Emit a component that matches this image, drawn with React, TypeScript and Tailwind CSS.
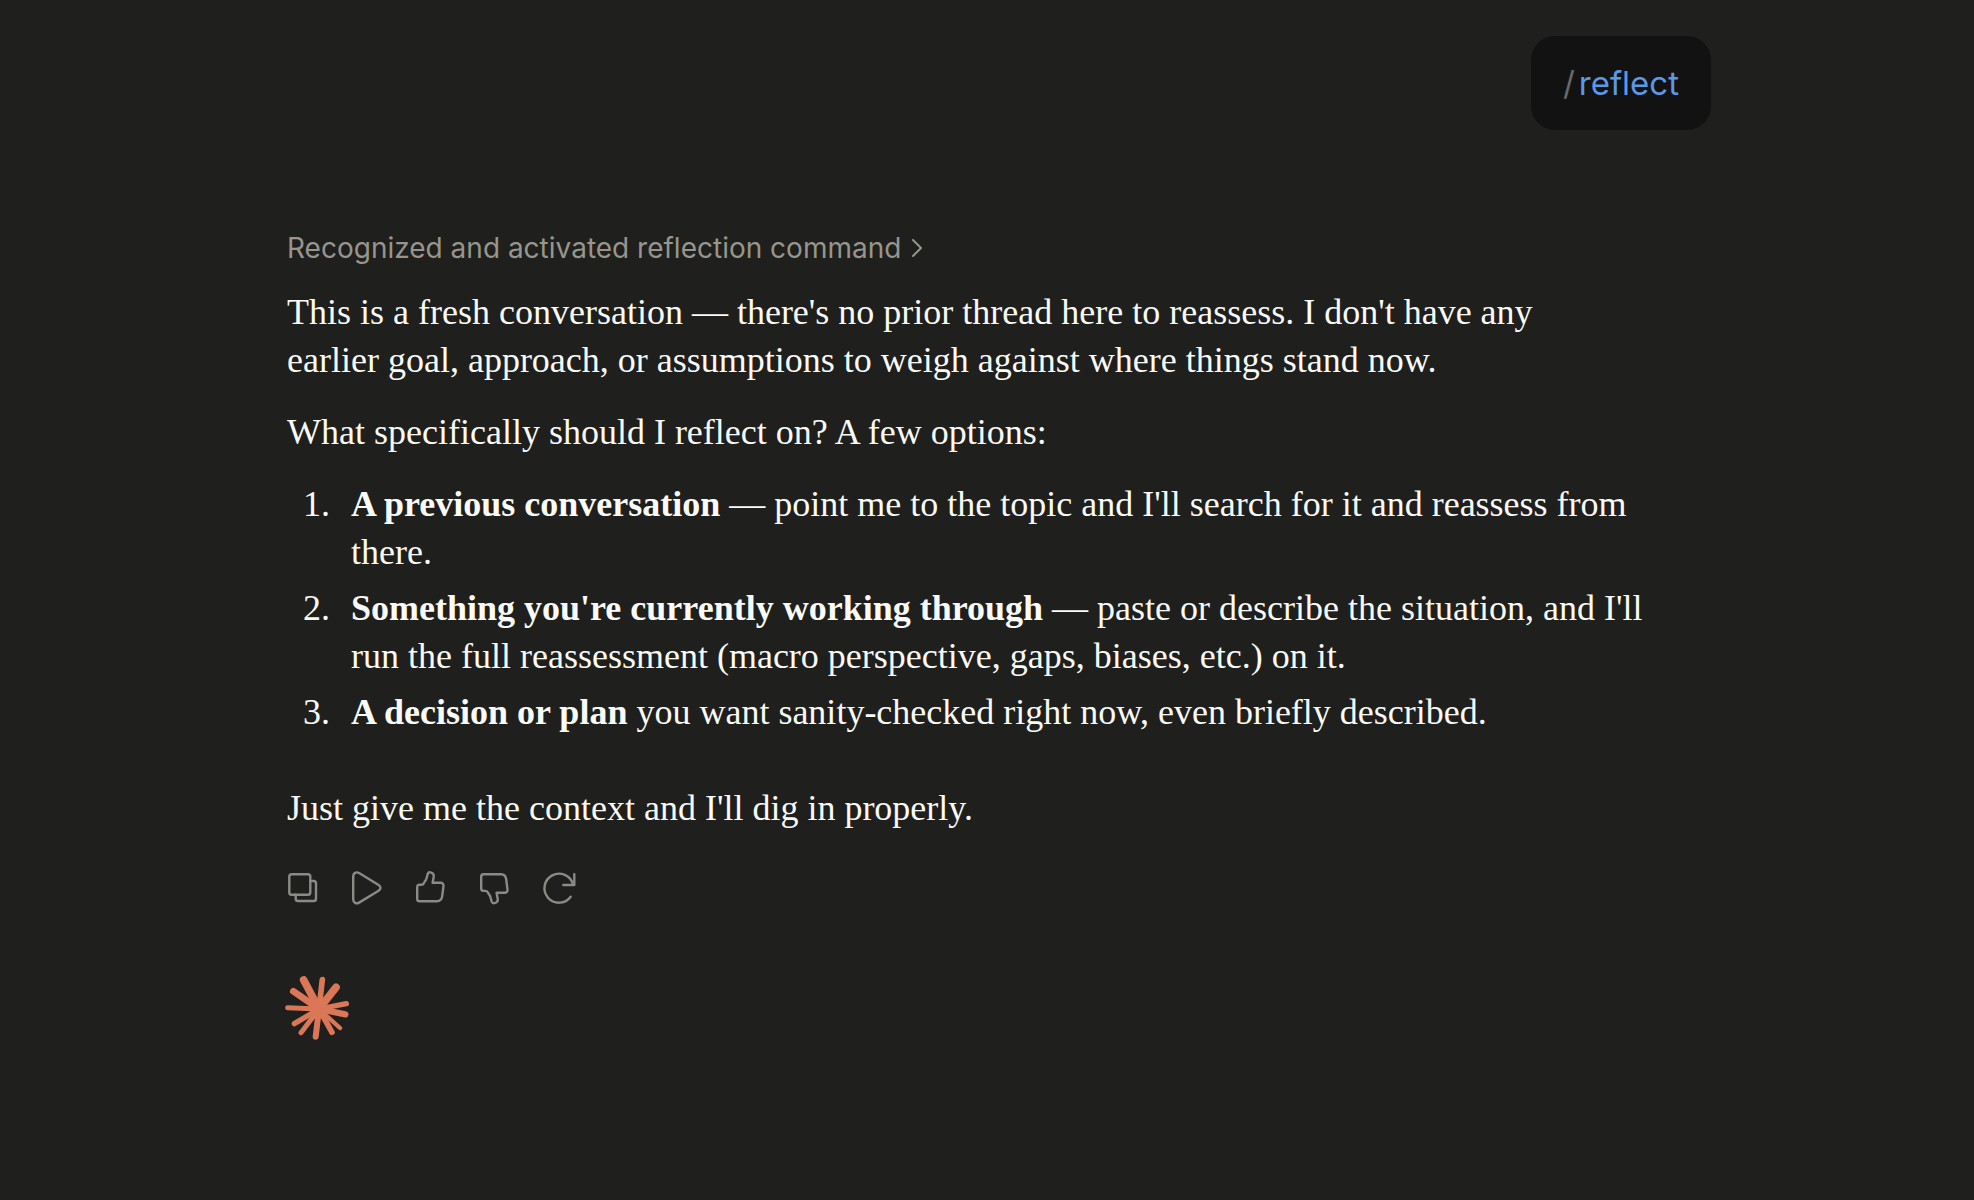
import type { ReactNode } from "react";

function Icon({ children }: { children: ReactNode }) {
  return (
    <svg
      viewBox="0 0 40 40"
      className="size-10"
      fill="none"
      stroke="currentColor"
      strokeWidth="2.400"
      strokeLinecap="round"
      strokeLinejoin="round"
      aria-hidden="true"
    >
      {children}
    </svg>
  );
}

const thumb =
  "M8.5 16.7h1.8c1.2 0 2.1-.6 2.6-1.6.6-1.300 1.400-2.200 2.100-3.500.8-1.600 1.100-3.800 1.700-5.600.5-1.300 1.500-1.900 2.700-1.600 2.400.6 3.700 2.300 3.300 4.500l-1.100 5.900h8.200c1.700 0 2.900 1.400 2.700 3.200l-1.300 10.200c-.4 3-2.300 5.100-5.200 5.100H8.500c-1.400 0-2.300-.9-2.300-2.300V19c0-1.400.9-2.300 2.300-2.300z";

const actions: { label: string; icon: ReactNode }[] = [
  {
    label: "Copy",
    icon: (
      <>
        <rect x="6.300" y="6.300" width="21" height="20.500" rx="2.300" />
        <path d="M27.300 13h3.400c1.300 0 2.300 1 2.300 2.300v15.400c0 1.300-1 2.300-2.300 2.300H15c-1.300 0-2.300-1-2.300-2.300v-3.900" />
      </>
    ),
  },
  {
    label: "Read aloud",
    icon: (
      <path d="M6.200 8.400v22.900c0 3.400 3 5 5.900 3.300l19.500-11.900c2.500-1.500 2.500-4.200 0-5.700L12.100 5.100C9.200 3.400 6.200 5 6.200 8.400z" />
    ),
  },
  { label: "Good response", icon: <path d={thumb} /> },
  {
    label: "Bad response",
    icon: <path d={thumb} transform="matrix(1 0 0 -1 0 39.6)" />,
  },
  {
    label: "Retry",
    icon: (
      <>
        <path d="M31.700 28.700A14.500 14.500 0 1 1 34 16.500" />
        <path d="M35.300 6.300V17h-11" />
      </>
    ),
  },
];

// Ray tips (x, y) and thickness, drawn from the centre of the mark.
const rays: [number, number, number][] = [
  [101, 66, 23],
  [157, 65, 17],
  [198, 88, 23],
  [229, 137, 16],
  [226, 169, 19],
  [210, 210, 13],
  [186, 223, 17],
  [137, 236, 18],
  [93, 224, 15],
  [73, 197, 16],
  [53, 149, 15],
  [70, 100, 20],
];

function Starburst() {
  return (
    <svg
      viewBox="45 54 192 192"
      className="size-16 text-[#d97757]"
      stroke="currentColor"
      fill="currentColor"
      strokeLinecap="round"
      role="img"
      aria-label="Assistant"
    >
      <circle cx="147" cy="152" r="27" stroke="none" />
      {rays.map(([x, y, w]) => (
        <line key={`${x}-${y}`} x1="147" y1="153" x2={x} y2={y} strokeWidth={w} />
      ))}
    </svg>
  );
}

export default function App() {
  return (
    <div className="min-h-screen bg-[#1f1f1d] px-6 pt-9 pb-20 text-[#fafaf7]">
      <main className="mx-auto flex max-w-[1448px] flex-col">
        <div className="flex gap-1 self-end rounded-3xl bg-[#121212] px-8 py-[23px] font-['Inter',sans-serif] text-[33px] leading-[48px] text-[#5b98e6]">
          <span className="text-[#6a6965]">/</span>
          <span>reflect</span>
        </div>

        <article className="mt-[98px] pl-6">
          <button
            type="button"
            className="flex items-center gap-1 font-['Inter',sans-serif] text-[28px] leading-10 text-[#97958c]"
          >
            Recognized and activated reflection command
            <svg
              viewBox="0 0 24 24"
              className="size-6"
              fill="none"
              stroke="currentColor"
              strokeWidth="2"
              strokeLinecap="round"
              strokeLinejoin="round"
              aria-hidden="true"
            >
              <path d="M8 4l8 8-8 8" />
            </svg>
          </button>

          <div className="mt-5 flex flex-col gap-6 pr-16 font-['Liberation_Serif',serif] text-[36px] leading-[48px]">
            <p className="pr-8">
              This is a fresh conversation — there's no prior thread here to reassess. I don't have any
              earlier goal, approach, or assumptions to weigh against where things stand now.
            </p>
            <p className="pr-8">What specifically should I reflect on? A few options:</p>
            <ol className="mb-6 flex list-outside list-decimal flex-col gap-2 pl-13">
              <li className="pl-3">
                <strong>A previous conversation</strong> — point me to the topic and I'll search for it
                and reassess from there.
              </li>
              <li className="pl-3">
                <strong>Something you're currently working through</strong> — paste or describe the
                situation, and I'll run the full reassessment (macro perspective, gaps, biases, etc.) on
                it.
              </li>
              <li className="pl-3">
                <strong>A decision or plan</strong> you want sanity-checked right now, even briefly
                described.
              </li>
            </ol>
            <p className="pr-8">Just give me the context and I'll dig in properly.</p>
          </div>

          <div className="mt-6 -ml-4 flex text-[#8b8a86]">
            {actions.map(({ label, icon }) => (
              <button
                key={label}
                type="button"
                aria-label={label}
                className="flex size-16 items-center justify-center rounded-lg"
              >
                <Icon>{icon}</Icon>
              </button>
            ))}
          </div>

          <div className="mt-14 -ml-0.5">
            <Starburst />
          </div>
        </article>
      </main>
    </div>
  );
}
